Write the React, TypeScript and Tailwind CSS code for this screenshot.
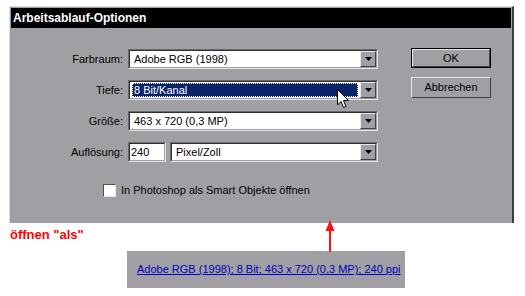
import React from "react";

const Arrow = () => (
  <span className="flex w-[16px] h-full items-center justify-center bg-[#a09fa4] border-t border-l border-t-[#e8e8e8] border-l-[#e8e8e8] border-b border-r border-b-[#404040] border-r-[#404040]">
    <svg width="7" height="4" viewBox="0 0 7 4">
      <path d="M0 0 H7 L3.5 4 Z" fill="#000" />
    </svg>
  </span>
);

const Select = ({ text, w, selected }: { text: string; w: string; selected?: boolean }) => (
  <div className={`${w} h-[20px] flex border-t border-l border-t-[#6a6a6a] border-l-[#6a6a6a] border-b border-r border-b-[#e6e6e6] border-r-[#e6e6e6]`}>
    <div className="flex flex-1 h-full border-t border-l border-t-[#303030] border-l-[#303030] border-b border-r border-b-[#a09fa4] border-r-[#a09fa4] bg-white">
      <div className="flex-1 flex items-center px-[2px]">
        {selected ? (
          <div className="w-full h-[14px] bg-[#0a246a] border border-dotted border-[#ffffff] flex items-center pl-[1px] text-white">
            {text}
          </div>
        ) : (
          <span className="pl-[2px]">{text}</span>
        )}
      </div>
      <Arrow />
    </div>
  </div>
);

const Row = ({ label, children }: { label: string; children: React.ReactNode }) => (
  <div className="flex items-center h-[20px]">
    <div className="w-[117px] text-right pr-[5px]">{label}</div>
    {children}
  </div>
);

export default function App() {
  return (
    <div
      className="relative w-[525px] h-[296px] bg-white text-[11px] text-black leading-[13px] overflow-hidden"
      style={{ fontFamily: '"Liberation Sans", Arial, sans-serif' }}
    >
      <div className="ml-[9px] mt-[6px] w-[505px] h-[217px] bg-[#a09fa4] border-t border-l border-t-[#dcdcdc] border-l-[#dcdcdc] border-r-2 border-r-[#3c3c3c] pt-[1px] pl-[1px]">
        <div className="h-[20px] w-[500px] bg-black text-white font-bold text-[12px] flex items-center pl-[2px]">
          Arbeitsablauf-Optionen
        </div>
        <div className="flex pt-[21px]">
          <div className="w-[367px] flex flex-col gap-[11px]">
            <Row label="Farbraum:">
              <Select text="Adobe RGB (1998)" w="w-[250px]" />
            </Row>
            <Row label="Tiefe:">
              <Select text="8 Bit/Kanal" w="w-[250px]" selected />
            </Row>
            <Row label="Größe:">
              <Select text="463 x 720 (0,3 MP)" w="w-[250px]" />
            </Row>
            <Row label="Auflösung:">
              <div className="w-[38px] h-[20px] border-t border-l border-t-[#6a6a6a] border-l-[#6a6a6a] border-b border-r border-b-[#e6e6e6] border-r-[#e6e6e6]">
                <div className="h-full border-t border-l border-t-[#303030] border-l-[#303030] border-b border-r border-b-[#a09fa4] border-r-[#a09fa4] bg-white flex items-center pl-[1px]">
                  240
                </div>
              </div>
              <div className="ml-[4px]">
                <Select text="Pixel/Zoll" w="w-[208px]" />
              </div>
            </Row>
            <div className="flex items-center mt-[11px] pl-[92px]">
              <div className="w-[13px] h-[13px] bg-white border-t border-l border-t-[#505050] border-l-[#505050] border-b border-r border-b-[#e6e6e6] border-r-[#e6e6e6]" />
              <span className="ml-[5px]">In Photoshop als Smart Objekte öffnen</span>
            </div>
          </div>
          <div className="ml-[33px] flex flex-col">
            <div className="w-[80px] h-[20px] border border-black mt-[-1px]">
              <div className="h-full flex items-center justify-center border-t border-l border-t-[#e8e8e8] border-l-[#e8e8e8] border-b border-r border-b-[#404040] border-r-[#404040]">
                OK
              </div>
            </div>
            <div className="w-[80px] h-[21px] mt-[9px] flex items-center justify-center border-t border-l border-t-[#e8e8e8] border-l-[#e8e8e8] border-b border-r border-b-[#404040] border-r-[#404040]">
              Abbrechen
            </div>
          </div>
        </div>
      </div>

      <div className="mt-[4px] pl-[10px] h-[15px] text-[13px] leading-[15px] font-bold text-[#ff0000]">
        öffnen "als"
      </div>
      <div className="ml-[127px] mt-[9px] w-[278px] h-[37px] bg-[#a09fa4] flex items-center pl-[10px]">
        <span className="underline text-[#0000c0]">Adobe RGB (1998); 8 Bit; 463 x 720 (0,3 MP); 240 ppi</span>
      </div>

      <svg className="absolute left-[325px] top-[220px]" width="10" height="32" viewBox="0 0 10 32">
        <path d="M5 0 L9.5 11 H0.5 Z" fill="#ff1010" />
        <rect x="4" y="10" width="2" height="22" fill="#ff1010" />
      </svg>

      <svg className="absolute left-[337px] top-[89px]" width="13" height="20" viewBox="0 0 13 20">
        <path
          d="M0.5 0.5 V16 L4 12.5 L6.5 18.5 L9 17.5 L6.5 11.5 H11.5 Z"
          fill="#fff"
          stroke="#000"
          strokeWidth="1"
        />
      </svg>
    </div>
  );
}
